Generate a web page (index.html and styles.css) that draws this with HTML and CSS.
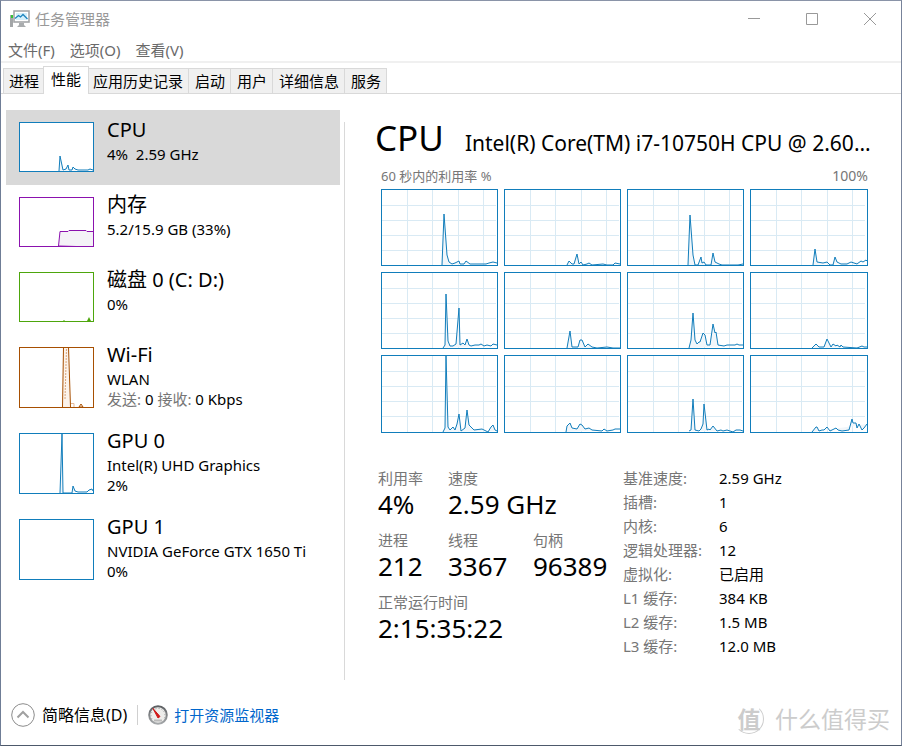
FILE: index.html
```html
<!DOCTYPE html>
<html lang="zh-CN">
<head>
<meta charset="utf-8">
<title>任务管理器</title>
<meta name="viewport" content="width=device-width, initial-scale=1">
<link rel="stylesheet" href="styles.css">
</head>
<body>
<svg class="defs" aria-hidden="true"><defs>
  <path id="grid" class="grid" d="M25.5 0V76M50.5 0V76M76.5 0V76M101.5 0V76M0 15.5H114M0 30.5H114M0 45.5H114M0 60.5H114"/>
  <linearGradient id="bezel" x1="0" y1="0" x2="0" y2="1"><stop offset="0" stop-color="#5c5f62"/><stop offset="1" stop-color="#a5a8aa"/></linearGradient>
</defs></svg>
<div class="window">
  <header class="titlebar">
    <svg class="app-icon" width="20" height="18" viewBox="0 0 20 18" aria-hidden="true">
      <rect x="0" y="5" width="3" height="12" fill="#a3a6a8"/><rect x="1" y="5" width="2" height="3" fill="#35c435"/>
      <rect x="4" y="1" width="15" height="11" fill="#fff" stroke="#a3a6a8" stroke-width="1.6"/>
      <rect x="6" y="3" width="11" height="7" fill="#d5f0fb"/>
      <path d="M5 8.500l3.500-3 2 1.500 2.500-2.500 4.500 4.500" fill="none" stroke="#1d84bd" stroke-width="1.300"/>
      <path d="M9 13h5v2l2 2H7l2-2z" fill="#a9acae"/>
    </svg>
    <h1 class="title">任务管理器</h1>
    <div class="caption">
      <button type="button" aria-label="最小化"><svg width="12" height="12" viewBox="0 0 12 12"><path d="M0 5.500h12"/></svg></button>
      <button type="button" aria-label="最大化"><svg width="12" height="12" viewBox="0 0 12 12"><path d="M.5.5h11v11H.5z"/></svg></button>
      <button type="button" aria-label="关闭"><svg width="12" height="12" viewBox="0 0 12 12"><path d="M0 0l12 12M12 0L0 12"/></svg></button>
    </div>
  </header>
  <nav class="menu"><button type="button">文件(F)</button><button type="button">选项(O)</button><button type="button">查看(V)</button></nav>
  <div class="tabs" role="tablist">
    <button type="button" role="tab">进程</button><button type="button" role="tab" class="active" aria-selected="true">性能</button><button type="button" role="tab">应用历史记录</button><button type="button" role="tab">启动</button><button type="button" role="tab">用户</button><button type="button" role="tab">详细信息</button><button type="button" role="tab">服务</button>
  </div>
  <main class="content">
    <nav class="devices">
      <button type="button" class="device selected">
        <svg class="mini cpu" viewBox="0 0 73 48" preserveAspectRatio="none"><polyline points="39,48 40,33 43,47 46,46 48,42 49,47 52,47 53,44 55,46 58,47 68,47 70,46 73,47"/></svg>
        <span class="info"><span class="name">CPU</span><span class="line">4%&nbsp; 2.59 GHz</span></span>
      </button>
      <button type="button" class="device">
        <svg class="mini memory" viewBox="0 0 73 48" preserveAspectRatio="none"><path d="M38.500 48L40 33.500H48L49 32.500H66L67 33.500H74V49z"/></svg>
        <span class="info"><span class="name">内存</span><span class="line">5.2/15.9 GB (33%)</span></span>
      </button>
      <button type="button" class="device">
        <svg class="mini disk" viewBox="0 0 73 48" preserveAspectRatio="none"><path d="M43 48l1-1 1 1M67 48l2-4 2 4z"/></svg>
        <span class="info"><span class="name">磁盘 0 (C: D:)</span><span class="line">0%</span></span>
      </button>
      <button type="button" class="device">
        <svg class="mini tall wifi" viewBox="0 0 73 59" preserveAspectRatio="none"><path d="M42.500 59L43.500-1H48.500L50.500 59"/><path class="dotted" d="M45 51L46.500 0"/><path class="faint" d="M51 55.500h3v4"/><path d="M59 59l2-3 2 3z"/></svg>
        <span class="info"><span class="name">Wi-Fi</span><span class="line">WLAN</span><span class="line"><span class="muted">发送:</span> 0 <span class="muted">接收:</span> 0 Kbps</span></span>
      </button>
      <button type="button" class="device">
        <svg class="mini tall cpu" viewBox="0 0 73 59" preserveAspectRatio="none"><polyline points="40,59 42,0 43,59 48,59 52,59 53,52 55,57 58,58 67,58 69,56 72,55 73,57"/></svg>
        <span class="info"><span class="name">GPU 0</span><span class="line">Intel(R) UHD Graphics</span><span class="line">2%</span></span>
      </button>
      <button type="button" class="device">
        <svg class="mini tall cpu" viewBox="0 0 73 59" preserveAspectRatio="none"></svg>
        <span class="info"><span class="name">GPU 1</span><span class="line">NVIDIA GeForce GTX 1650 Ti</span><span class="line">0%</span></span>
      </button>
    </nav>
    <section class="detail">
      <div class="heading"><h2>CPU</h2><p>Intel(R) Core(TM) i7-10750H CPU @ 2.60GHz</p></div>
      <div class="graphs">
        <div class="scale"><span>60 秒内的利用率 %</span><span class="max">100%</span></div>
        <div class="cores">
          <svg viewBox="0 0 115 75" preserveAspectRatio="none"><use href="#grid"/><polyline points="60,75 62,24 65,65 67,72 70,74 73,73 77,71 78,74 82,74 84,71 88,74 104,74 107,73 111,72 115,73"/></svg>
          <svg viewBox="0 0 115 75" preserveAspectRatio="none"><use href="#grid"/><polyline points="62,75 64,71 67,74 69,74 72,64 74,74 76,72 78,75 82,74 84,73 87,75 98,74 102,75 108,75 110,73 115,74"/></svg>
          <svg viewBox="0 0 115 75" preserveAspectRatio="none"><use href="#grid"/><polyline points="60,75 62,25 65,65 67,75 70,75 73,67 74,73 76,72 78,75 83,75 85,63 87,72 91,74 94,75 110,75 115,74"/></svg>
          <svg viewBox="0 0 116 75" preserveAspectRatio="none"><use href="#grid"/><polyline points="62,75 64,59 66,72 72,73 76,72 79,75 82,75 84,67 86,72 90,74 96,74 100,72 106,74 110,71 112,72 115,70 116,71"/></svg>
          <svg viewBox="0 0 115 75" preserveAspectRatio="none"><use href="#grid"/><polyline points="61,75 63,72 64,21 66,68 68,73 71,73 74,71 77,35 78,72 81,70 83,72 85,66 87,72 89,73 93,72 97,72 99,71 102,73 105,72 109,73 111,71 115,72"/></svg>
          <svg viewBox="0 0 115 75" preserveAspectRatio="none"><use href="#grid"/><polyline points="62,75 65,58 67,74 73,74 75,67 77,67 80,74 83,71 87,74 92,75 102,74 108,75 115,75"/></svg>
          <svg viewBox="0 0 115 75" preserveAspectRatio="none"><use href="#grid"/><polyline points="61,75 63,67 65,40 67,67 69,71 71,69 72,69 75,60 77,62 79,72 82,72 85,51 87,60 88,59 90,72 96,73 99,72 107,72 109,71 111,72 115,72"/></svg>
          <svg viewBox="0 0 116 75" preserveAspectRatio="none"><use href="#grid"/><polyline points="61,75 65,71 68,74 73,74 76,66 80,74 82,71 85,73 86,72 89,74 90,72 92,74 106,75 111,73 113,74 116,74"/></svg>
          <svg viewBox="0 0 115 76" preserveAspectRatio="none"><use href="#grid"/><polyline points="61,76 63,72 64,0 66,71 68,74 71,71 73,74 75,68 77,58 79,75 83,72 85,54 87,69 92,74 100,73 106,76 109,71 111,69 113,74 115,75"/></svg>
          <svg viewBox="0 0 115 76" preserveAspectRatio="none"><use href="#grid"/><polyline points="61,76 62,70 65,67 67,72 72,73 75,68 77,69 80,73 84,72 87,74 97,75 99,73 102,75 108,74 110,73 115,73"/></svg>
          <svg viewBox="0 0 115 76" preserveAspectRatio="none"><use href="#grid"/><polyline points="61,75 63,74 65,43 67,74 71,75 73,73 75,68 76,48 79,74 81,73 82,74 85,70 89,75 93,74 95,75 99,74 105,76 108,74 112,74 115,75"/></svg>
          <svg viewBox="0 0 116 76" preserveAspectRatio="none"><use href="#grid"/><polyline points="61,76 65,71 66,71 68,75 71,74 73,74 76,71 79,75 85,72 87,74 91,75 98,74 101,63 102,67 105,67 106,72 108,68 111,74 113,72 116,68"/></svg>
        </div>
      </div>
      <div class="stats">
        <dl class="figures">
          <div><dt>利用率</dt><dd>4%</dd></div>
          <div class="rest"><dt>速度</dt><dd>2.59 GHz</dd></div>
          <div><dt>进程</dt><dd>212</dd></div>
          <div><dt>线程</dt><dd>3367</dd></div>
          <div><dt>句柄</dt><dd>96389</dd></div>
          <div class="full"><dt>正常运行时间</dt><dd>2:15:35:22</dd></div>
        </dl>
        <table class="specs">
          <tr><th scope="row">基准速度:</th><td>2.59 GHz</td></tr>
          <tr><th scope="row">插槽:</th><td>1</td></tr>
          <tr><th scope="row">内核:</th><td>6</td></tr>
          <tr><th scope="row">逻辑处理器:</th><td>12</td></tr>
          <tr><th scope="row">虚拟化:</th><td>已启用</td></tr>
          <tr><th scope="row">L1 缓存:</th><td>384 KB</td></tr>
          <tr><th scope="row">L2 缓存:</th><td>1.5 MB</td></tr>
          <tr><th scope="row">L3 缓存:</th><td>12.0 MB</td></tr>
        </table>
      </div>
    </section>
  </main>
  <footer class="footer">
    <button type="button" class="fewer"><svg width="24" height="24" viewBox="0 0 24 24" fill="none" aria-hidden="true"><circle cx="12" cy="12" r="11.300" stroke="#8c8c8c"/><path d="M6.500 14.500L12 9l5.500 5.500" stroke="#a0a0a0" stroke-width="2"/></svg><span>简略信息(D)</span></button>
    <a class="monitor" href="#"><svg width="20" height="20" viewBox="0 0 20 20" aria-hidden="true"><circle cx="10" cy="10" r="8.800" fill="#ededeb" stroke="url(#bezel)" stroke-width="2"/><path d="M4 14a7 7 0 1 1 12 0" fill="none" stroke="#999" stroke-dasharray="1 2"/><path d="M5 3.500l7 8-2 1.500z" fill="#d01818" stroke="#d01818"/><path d="M6 15.500h8" stroke="#bbb" stroke-width="2"/></svg><span>打开资源监视器</span></a>
    <div class="watermark"><span class="seal">值</span><span>什么值得买</span></div>
  </footer>
</div>
</body>
</html>
```
FILE: styles.css
```css
* { box-sizing: border-box; }
body, h1, h2, p, dl, dd { margin: 0; }
body {
  background: #fff;
  color: #000;
  font: 15px/20px "Noto Sans", "Noto Sans CJK SC", sans-serif;
}
button {
  margin: 0;
  padding: 0;
  border: 0;
  background: none;
  color: inherit;
  font: inherit;
  text-align: left;
}
svg { display: block; flex: none; }
.defs { position: absolute; width: 0; height: 0; }

.window {
  display: flex;
  flex-direction: column;
  min-height: 100vh;
  border: 1px solid;
  border-color: #8a94a8 #77839a #4d596b #6f7d96;
}

.titlebar { display: flex; align-items: center; height: 36px; padding: 0 2px 0 9px; }
.title { margin-left: 5px; color: #999; font-size: 15px; font-weight: 400; }
.caption { display: flex; margin-left: auto; }
.caption button { display: grid; place-items: center; width: 58px; height: 36px; }
.caption svg { fill: none; stroke: #999; }

.menu {
  display: flex;
  align-items: flex-start;
  gap: 15px;
  height: 26px;
  padding: 3px 7px 0;
  border-bottom: 2px solid #f0f0f0;
  color: #6a6a6a;
}

.tabs {
  display: flex;
  align-items: flex-end;
  height: 31px;
  padding-left: 2px;
  border-bottom: 1px solid #d9d9d9;
}
.tabs button {
  height: 25px;
  padding: 0 5px;
  border: 1px solid #d9d9d9;
  border-width: 1px 1px 0 0;
  background: #f0f0f0;
}
.tabs button:first-child { border-left-width: 1px; }
.tabs .active {
  height: 28px;
  margin: 0 0 -1px -2px;
  padding: 0 7px 4px;
  border-left-width: 1px;
  background: #fff;
}
.tabs .active + button { padding: 0 5px 0 4px; }
.tabs .active + button ~ button { padding: 0 5px 0 6px; }

.content { display: flex; flex: 1; padding: 16px 0 0 5px; }
.devices { flex: 0 0 334px; }
.device { display: flex; gap: 13px; width: 100%; min-height: 75px; padding: 6px 13px 5px; }
.device:has(.tall) { min-height: 86px; }
.selected { background: #d9d9d9; }
.info { display: block; }
.name, .line { display: block; white-space: nowrap; }
.name { font-size: 20px; line-height: 28px; }
.muted { color: #767676; }
.mini {
  width: 75px;
  height: 50px;
  margin-top: 6px;
  border: 1px solid currentColor;
  background: #fff;
  fill: none;
  stroke: currentColor;
}
.tall { height: 61px; }
.cpu { color: #117dbb; fill: #f1f6fa; }
.memory { color: #8b12ae; fill: #f4f2f7; }
.disk { color: #4da60c; fill: #4da60c; stroke: none; }
.wifi { color: #a74f01; fill: #fcf3eb; }
.dotted { stroke: #d9a57b; stroke-dasharray: 2 1; fill: none; }
.faint { stroke: #e3b99a; fill: none; }

.detail {
  flex: 1;
  min-width: 0;
  margin: 12px 0 5px 4px;
  padding: 0 30px;
  border-left: 1px solid #d9d9d9;
}
.heading { display: flex; align-items: baseline; gap: 21px; height: 44px; line-height: 32px; }
.heading h2 { font-size: 35px; font-weight: 400; }
.heading p {
  flex: 1;
  overflow: hidden;
  font-size: 21px;
  text-overflow: ellipsis;
  white-space: nowrap;
}
.graphs { margin: 0 3px 0 6px; }
.scale { display: flex; justify-content: space-between; height: 23px; color: #767676; font-size: 13px; }
.max { font-size: 14px; }
.cores { display: grid; grid-template-columns: 117fr 117fr 117fr 118fr; gap: 6px; }
.cores svg {
  width: 100%;
  height: 77px;
  border: 1px solid #117dbb;
  fill: #f1f6fa;
  stroke: #117dbb;
}
.cores svg:nth-child(n+9) { height: 78px; }
.grid { fill: none; stroke: #d9eaf4; shape-rendering: crispEdges; }

.stats { display: flex; gap: 5px; margin: 33px 0 0 3px; }
.figures {
  display: grid;
  grid-template-columns: 70px 85px 85px;
  gap: 10px 0;
  align-content: start;
}
.figures .rest { grid-column: span 2; }
.figures .full { grid-column: span 3; }
dt { color: #767676; line-height: 24px; }
dd { font-size: 26px; line-height: 28px; }
.specs { border-collapse: collapse; align-self: start; }
.specs th, .specs td { height: 24px; padding: 0; font-weight: 400; line-height: 24px; text-align: left; white-space: nowrap; }
.specs th { width: 96px; color: #767676; }

.footer { display: flex; align-items: center; height: 60px; padding: 0 10px; }
.fewer { display: flex; align-items: center; gap: 7px; font-size: 16px; }
.monitor {
  display: flex;
  align-items: center;
  gap: 6px;
  margin-left: 10px;
  padding-left: 10px;
  border-left: 1px solid #d0d0d0;
  color: #0066cc;
  line-height: 15px;
  text-decoration: none;
}
.watermark { display: flex; align-items: center; gap: 11px; margin: 8px 1px 0 auto; color: #ccc; font-size: 23px; line-height: 28px; }
.seal {
  width: 30px;
  height: 30px;
  border: 1px solid #ddd;
  border-color: transparent #ccc #ccc transparent;
  border-radius: 50%;
  font-weight: 700;
  text-align: center;
}
```
